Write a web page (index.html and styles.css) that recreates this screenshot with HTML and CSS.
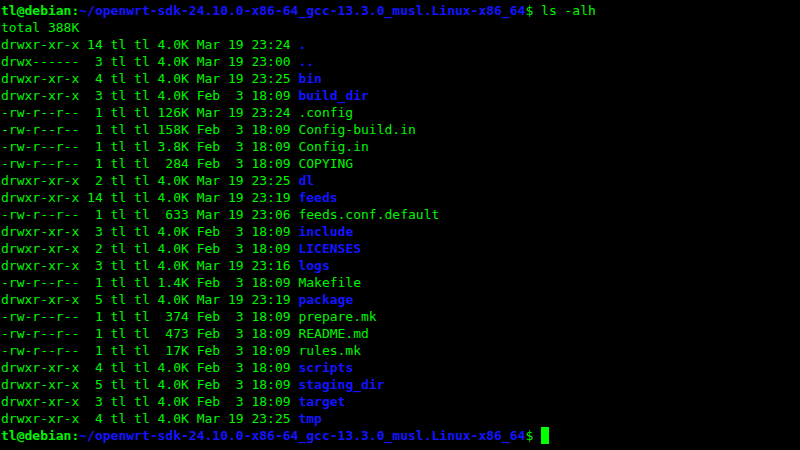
FILE: index.html
```html
<!DOCTYPE html>
<html>
<head>
<meta charset="utf-8">
<link rel="stylesheet" href="styles.css">
</head>
<body>
<pre class="term"><span class="pu">tl@debian:</span><span class="pa">~/openwrt-sdk-24.10.0-x86-64_gcc-13.3.0_musl.Linux-x86_64</span>$ ls -alh
total 388K
drwxr-xr-x 14 tl tl 4.0K Mar 19 23:24 <span class="d">.</span>
drwx------  3 tl tl 4.0K Mar 19 23:00 <span class="d">..</span>
drwxr-xr-x  4 tl tl 4.0K Mar 19 23:25 <span class="d">bin</span>
drwxr-xr-x  3 tl tl 4.0K Feb  3 18:09 <span class="d">build_dir</span>
-rw-r--r--  1 tl tl 126K Mar 19 23:24 .config
-rw-r--r--  1 tl tl 158K Feb  3 18:09 Config-build.in
-rw-r--r--  1 tl tl 3.8K Feb  3 18:09 Config.in
-rw-r--r--  1 tl tl  284 Feb  3 18:09 COPYING
drwxr-xr-x  2 tl tl 4.0K Mar 19 23:25 <span class="d">dl</span>
drwxr-xr-x 14 tl tl 4.0K Mar 19 23:19 <span class="d">feeds</span>
-rw-r--r--  1 tl tl  633 Mar 19 23:06 feeds.conf.default
drwxr-xr-x  3 tl tl 4.0K Feb  3 18:09 <span class="d">include</span>
drwxr-xr-x  2 tl tl 4.0K Feb  3 18:09 <span class="d">LICENSES</span>
drwxr-xr-x  3 tl tl 4.0K Mar 19 23:16 <span class="d">logs</span>
-rw-r--r--  1 tl tl 1.4K Feb  3 18:09 Makefile
drwxr-xr-x  5 tl tl 4.0K Mar 19 23:19 <span class="d">package</span>
-rw-r--r--  1 tl tl  374 Feb  3 18:09 prepare.mk
-rw-r--r--  1 tl tl  473 Feb  3 18:09 README.md
-rw-r--r--  1 tl tl  17K Feb  3 18:09 rules.mk
drwxr-xr-x  4 tl tl 4.0K Feb  3 18:09 <span class="d">scripts</span>
drwxr-xr-x  5 tl tl 4.0K Feb  3 18:09 <span class="d">staging_dir</span>
drwxr-xr-x  3 tl tl 4.0K Feb  3 18:09 <span class="d">target</span>
drwxr-xr-x  4 tl tl 4.0K Mar 19 23:25 <span class="d">tmp</span>
<span class="pu">tl@debian:</span><span class="pa">~/openwrt-sdk-24.10.0-x86-64_gcc-13.3.0_musl.Linux-x86_64</span>$ <span class="cursor"> </span></pre>
</body>
</html>
```
FILE: styles.css
```css
html, body {
  margin: 0;
  padding: 0;
  background: #000;
  height: 100%;
  overflow: hidden;
}
.term {
  margin: 0;
  padding: 2px 0 0 1px;
  font-family: "DejaVu Sans Mono", "Liberation Mono", monospace;
  font-size: 13px;
  line-height: 17px;
  color: #00f400;
  white-space: pre;
}
.pu {
  font-weight: bold;
  color: #00f400;
}
.pa {
  font-weight: bold;
  color: #1414ff;
}
.d {
  font-weight: bold;
  color: #1414ff;
}
.cursor {
  display: inline-block;
  width: 8px;
  height: 17px;
  vertical-align: top;
  background: #00ff00;
}
```
